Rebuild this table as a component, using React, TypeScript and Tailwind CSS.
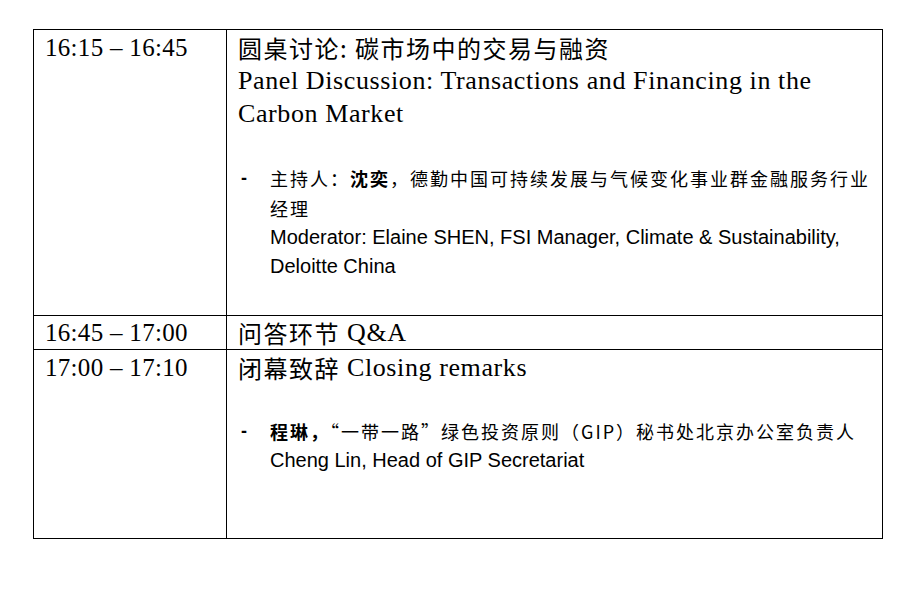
import React from 'react';

const serif = "font-['Liberation_Serif','Noto_Sans_CJK_SC',serif]";
const sans = "font-['Liberation_Sans','Noto_Sans_CJK_SC',sans-serif]";

const Cn: React.FC<{ children: React.ReactNode; bold?: boolean }> = ({ children, bold }) => (
  <span lang="zh-CN" className={`tracking-[2px] ${bold ? 'font-bold' : 'font-normal'}`}>
    {children}
  </span>
);

// one line of the session title, Chinese part first then English
const TitleLine: React.FC<{ cn?: React.ReactNode; en?: string }> = ({ cn, en }) => (
  <div className="flex h-[33px] items-center gap-[7px] whitespace-nowrap">
    {cn && (
      <span lang="zh-CN" className="font-['Noto_Sans_CJK_SC',sans-serif] text-[24px] leading-[33px] tracking-[1.5px]">
        {cn}
      </span>
    )}
    {en && <span className={`${serif} text-[26px] leading-[33px] tracking-[0.6px]`}>{en}</span>}
  </div>
);

const CnLine: React.FC<{ children: React.ReactNode }> = ({ children }) => (
  <div lang="zh-CN" className="font-['Noto_Sans_CJK_SC',sans-serif] text-[18px] leading-[30px]">
    {children}
  </div>
);

const EnLine: React.FC<{ children: React.ReactNode }> = ({ children }) => (
  <div className={`${sans} text-[20px] leading-[29px]`}>{children}</div>
);

const Bullet: React.FC<{ children: React.ReactNode }> = ({ children }) => (
  <div className="flex text-black">
    <span className={`${sans} w-[32px] shrink-0 pl-[3px] text-[18px] leading-[30px] font-bold`}>-</span>
    <div className="flex-1">{children}</div>
  </div>
);

const timeCls = `border border-black px-[11px] align-top ${serif} text-[25px] leading-[33px] tracking-[0.3px]`;

const App: React.FC = () => {
  return (
    <div className="min-h-[608px] w-[908px] bg-white pt-[29px] pl-[33px]">
      <table className="w-[850px] border-collapse text-black">
        <tbody>
          <tr className="h-[286px]">
            <td className={`w-[193px] pt-[1px] ${timeCls}`}>16:15 – 16:45</td>
            <td className="border border-black px-[11px] pt-[1px] align-top">
              <TitleLine cn="圆桌讨论: 碳市场中的交易与融资" />
              <TitleLine en="Panel Discussion: Transactions and Financing in the" />
              <TitleLine en="Carbon Market" />
              <div className="mt-[33px]">
                <Bullet>
                  <CnLine>
                    <Cn>主持人：</Cn>
                    <Cn bold>沈奕</Cn>
                    <Cn>，德勤中国可持续发展与气候变化事业群金融服务行业经理</Cn>
                  </CnLine>
                  <EnLine>
                    Moderator: Elaine SHEN, FSI Manager, Climate &amp; Sustainability, Deloitte China
                  </EnLine>
                </Bullet>
              </div>
            </td>
          </tr>
          <tr className="h-[34px]">
            <td className={timeCls}>16:45 – 17:00</td>
            <td className="border border-black px-[11px] align-top">
              <TitleLine cn="问答环节" en="Q&A" />
            </td>
          </tr>
          <tr className="h-[189px]">
            <td className={`pt-[1px] ${timeCls}`}>17:00 – 17:10</td>
            <td className="border border-black px-[11px] pt-[1px] align-top">
              <TitleLine cn="闭幕致辞" en="Closing remarks" />
              <div className="mt-[32px]">
                <Bullet>
                  <CnLine>
                    <Cn bold>程琳，</Cn>
                    <Cn>“一带一路”绿色投资原则（GIP）秘书处北京办公室负责人</Cn>
                  </CnLine>
                  <EnLine>Cheng Lin, Head of GIP Secretariat</EnLine>
                </Bullet>
              </div>
            </td>
          </tr>
        </tbody>
      </table>
    </div>
  );
};

export default App;
